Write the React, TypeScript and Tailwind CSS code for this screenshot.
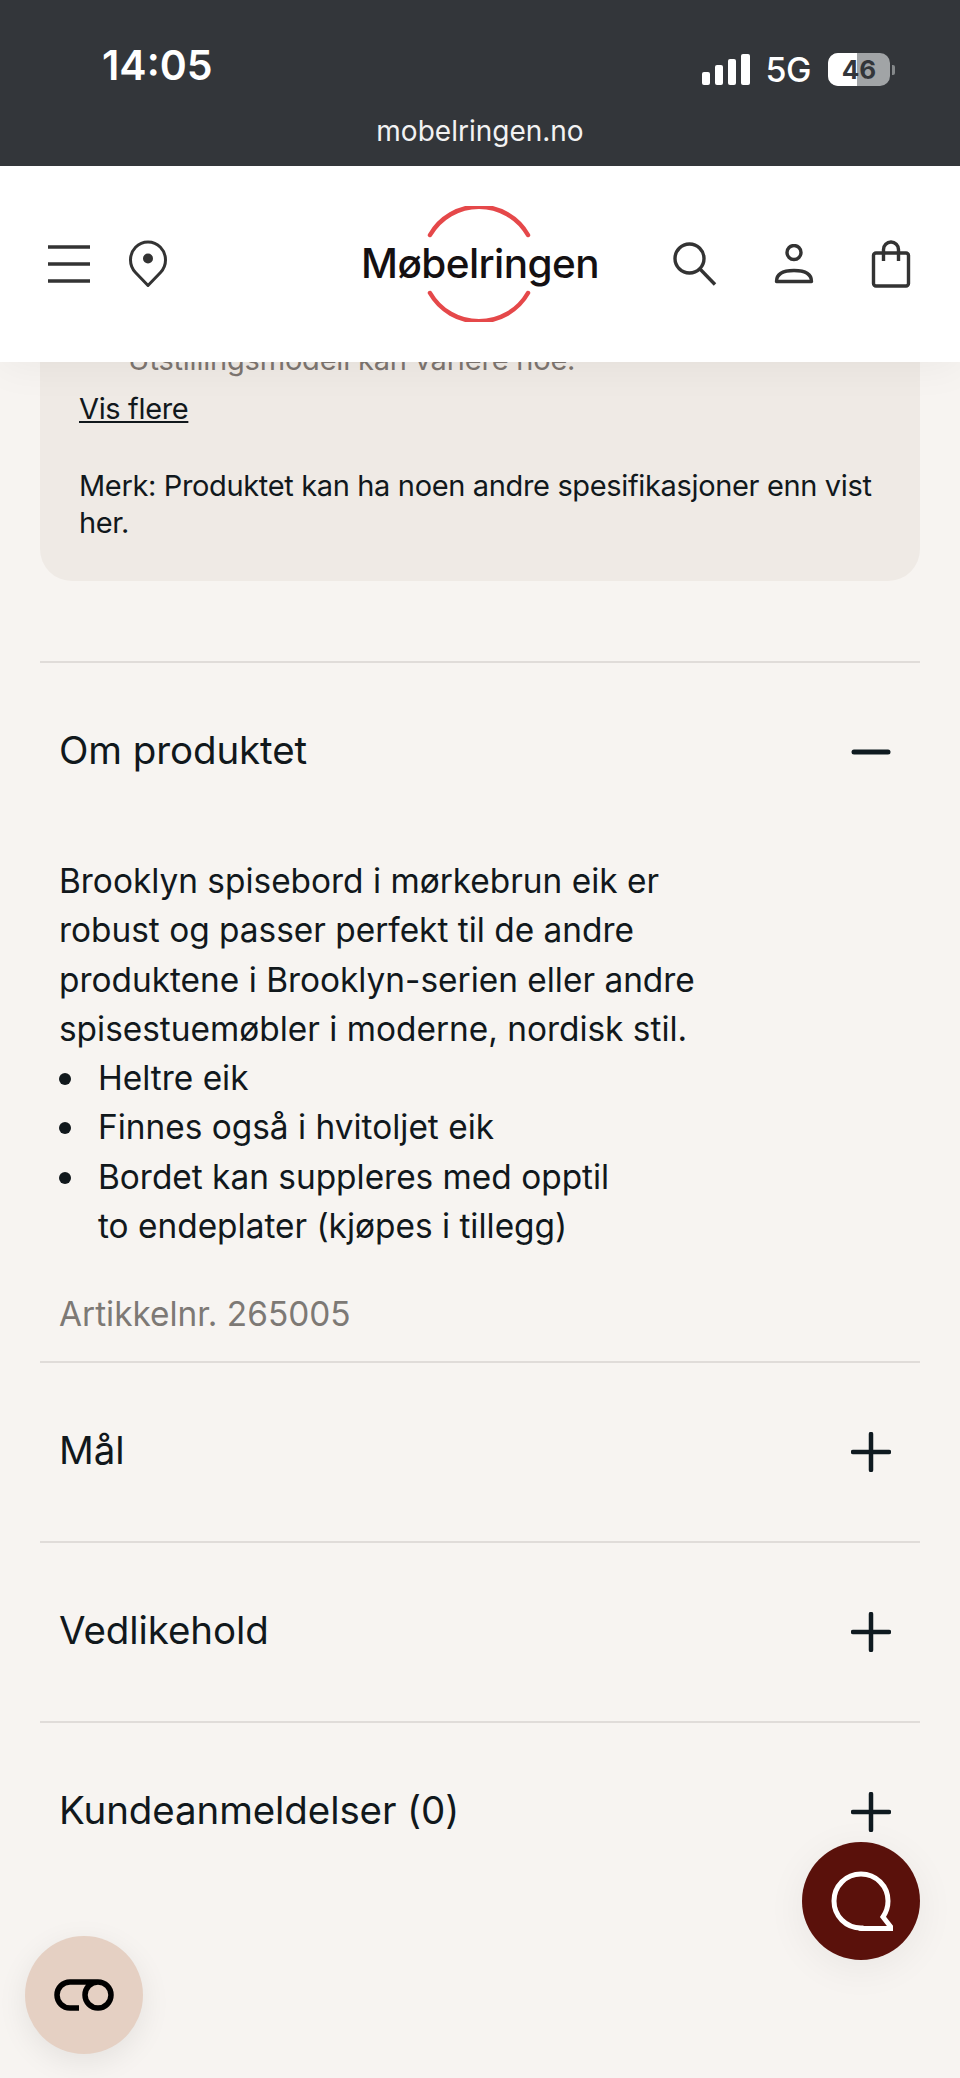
import { ReactNode } from "react";

const font = "font-['Inter','Liberation_Sans',sans-serif]";

function MenuIcon() {
  return (
    <svg width="44" height="40" viewBox="0 0 44 40" fill="none" stroke="#333333" strokeWidth="3.6">
      <path d="M1 3h42M1 20h42M1 37h42" />
    </svg>
  );
}

function PinIcon() {
  return (
    <svg width="38" height="48" viewBox="0 0 38 48" fill="none">
      <path
        d="M19 45.500 6.500 32.500C3.200 29 1.500 25.200 1.500 20 1.500 10 9.200 2 19 2s17.500 8 17.500 18c0 5.200-1.700 9-5 12.500z"
        stroke="#333333"
        strokeWidth="3"
        strokeLinejoin="round"
      />
      <circle cx="19" cy="18.500" r="5" fill="#333333" />
    </svg>
  );
}

function SearchIcon() {
  return (
    <svg width="44" height="44" viewBox="0 0 44 44" fill="none" stroke="#333333" strokeWidth="3.400">
      <circle cx="16.500" cy="16.500" r="14.500" />
      <path d="m27 27 15 15.500" />
    </svg>
  );
}

function UserIcon() {
  return (
    <svg width="40" height="40" viewBox="0 0 40 40" fill="none" stroke="#333333" strokeWidth="3.400">
      <circle cx="20" cy="8.500" r="7" />
      <path d="M2.500 37.500c0-7.500 7-11 17.500-11s17.500 3.500 17.500 11z" strokeLinejoin="round" />
    </svg>
  );
}

function BagIcon() {
  return (
    <svg width="40" height="48" viewBox="0 0 40 48" fill="none" stroke="#333333" strokeWidth="3.400">
      <rect x="2.500" y="13" width="35" height="33" rx="2.500" />
      <path d="M12.500 21V9.500a7.500 7.500 0 0 1 15 0V21" />
    </svg>
  );
}

function PlusIcon() {
  return (
    <svg width="40" height="40" viewBox="0 0 40 40" fill="none" stroke="#0f1a20" strokeWidth="4.500" strokeLinecap="round">
      <path d="M2 20h36M20 2v36" />
    </svg>
  );
}

function MinusIcon() {
  return (
    <svg width="40" height="40" viewBox="0 0 40 40" fill="none" stroke="#0f1a20" strokeWidth="5" strokeLinecap="round">
      <path d="M3 20h34" />
    </svg>
  );
}

function AccordionRow({ title, children }: { title: string; children?: ReactNode }) {
  return (
    <div className="border-t-2 border-[#e0dcd9]">
      <div className="flex h-[178px] items-center justify-between pl-[19px] pr-[29px]">
        <span className="mb-[3px] text-[38.500px] tracking-[-0.1px] text-[#11181c]">{title}</span>
        {children ?? <PlusIcon />}
      </div>
    </div>
  );
}

function Bullet({ children }: { children: ReactNode }) {
  return (
    <li className="flex">
      <span className="mt-[19px] mr-[27px] h-[12px] w-[12px] shrink-0 rounded-full bg-[#11181c]" />
      <span>{children}</span>
    </li>
  );
}

function App() {
  return (
    <div className={`relative h-[2078px] w-[960px] overflow-hidden bg-[#f7f4f1] ${font}`}>
      {/* statusbar */}
      <div className="relative z-20 h-[166px] bg-[#33363a] text-white">
        <div className="flex h-[104px] items-end justify-between pb-[18px] pl-[102px] pr-[65px]">
          <span className="text-[41px] leading-[41px] font-semibold">14:05</span>
          <div className="flex items-center">
            <div className="mr-[16px] flex items-end gap-[5px]">
              <div className="h-[13px] w-[8px] rounded-[2px] bg-white" />
              <div className="h-[20px] w-[8px] rounded-[2px] bg-white" />
              <div className="h-[26px] w-[8px] rounded-[2px] bg-white" />
              <div className="h-[31px] w-[9px] rounded-[2px] bg-white" />
            </div>
            <span className="mr-[17px] text-[34px] leading-[32px] font-medium tracking-[-0.5px]">5G</span>
            <div className="flex items-center gap-[2px]">
              <div className="relative flex h-[33px] w-[62px] items-center justify-center overflow-hidden rounded-[10px] bg-[#a1a4a6]">
                <div className="absolute inset-y-0 left-0 w-[29px] bg-white" />
                <span className="relative text-[26px] leading-none font-bold text-[#33363a]">46</span>
              </div>
              <div className="h-[10px] w-[3px] rounded-r-[2px] bg-[#85888a]" />
            </div>
          </div>
        </div>
        <div className="mt-[10px] text-center text-[28px] leading-[34px] text-[#f2f2f2]">mobelringen.no</div>
      </div>

      {/* header */}
      <header className="relative z-10 flex h-[196px] items-center justify-between bg-white pl-[47px] pr-[49px] shadow-[0_4px_40px_rgba(0,0,0,0.05)]">
        <div className="flex items-center gap-[38px]">
          <MenuIcon />
          <PinIcon />
        </div>
        <div className="absolute left-[361px] top-[40px] flex h-[116px] w-[238px] items-center justify-center">
          <svg className="absolute -left-[5px] top-0" width="236" height="116" viewBox="0 0 236 116" fill="none" stroke="#e5484a" strokeWidth="4.500" strokeLinecap="round">
            <path d="M74 29a56.500 56.500 0 0 1 98 0M74 87a56.500 56.500 0 0 0 98 0" />
          </svg>
          <span className="relative text-[40.500px] leading-none font-medium tracking-[-0.6px] whitespace-nowrap text-[#141012]">Møbelringen</span>
        </div>
        <div className="flex items-center gap-[57px]">
          <SearchIcon />
          <UserIcon />
          <BagIcon />
        </div>
      </header>

      {/* content */}
      <main className="-mt-[18px] px-[40px]">
        <div className="rounded-b-[32px] bg-[#efeae5] pr-[40px] pb-[40px] pl-[39px] text-[29px] leading-[37px] tracking-[-0.35px]">
          <p className="h-[37px] pl-[49px] leading-[31px] tracking-[-0.2px] text-[#7d7570]">Utstillingsmodell kan variere noe.</p>
          <a className="mt-[9px] block text-[#11181c] underline">Vis flere</a>
          <p className="mt-[40px] text-[#11181c]">
            Merk: Produktet kan ha noen andre spesifikasjoner enn vist her.
          </p>
        </div>

        <div className="mt-[80px]">
          <AccordionRow title="Om produktet">
            <MinusIcon />
          </AccordionRow>
          <div className="pt-[16px] pl-[19px] text-[33.400px] leading-[49.300px] text-[#11181c]">
            <p>
              Brooklyn spisebord i mørkebrun eik er
              <br />
              robust og passer perfekt til de andre
              <br />
              produktene i Brooklyn-serien eller andre
              <br />
              spisestuemøbler i moderne, nordisk stil.
            </p>
            <ul>
              <Bullet>Heltre eik</Bullet>
              <Bullet>Finnes også i hvitoljet eik</Bullet>
              <Bullet>
                Bordet kan suppleres med opptil
                <br />
                to endeplater (kjøpes i tillegg)
              </Bullet>
            </ul>
            <p className="mt-[39px] h-[71px] text-[#7d7975]">Artikkelnr. 265005</p>
          </div>
          <AccordionRow title="Mål" />
          <AccordionRow title="Vedlikehold" />
          <AccordionRow title="Kundeanmeldelser (0)" />
        </div>
      </main>

      {/* flytende knapper */}
      <button className="absolute left-[25px] top-[1936px] flex h-[118px] w-[118px] items-center justify-center rounded-full bg-[#e5d0c3] shadow-[0_8px_30px_rgba(0,0,0,0.08)]">
        <svg width="62" height="32" viewBox="0 0 62 32" fill="none" stroke="#000000" strokeWidth="5.500">
          <path d="M26 29H17a13 13 0 0 1 0-26h28a13 13 0 0 1 0 26 13 13 0 0 1 0-26" />
        </svg>
      </button>
      <button className="absolute left-[802px] top-[1842px] flex h-[118px] w-[118px] items-center justify-center rounded-full bg-[#5a110b] shadow-[0_8px_40px_rgba(0,0,0,0.06)]">
        <svg width="64" height="64" viewBox="0 0 64 64" fill="none" stroke="#ffffff" strokeWidth="5">
          <path d="M32 59C17 59 5 47 5 32S17 5 32 5s27 12 27 27c0 6-2 11.500-5 16l9 11.500H32z" strokeLinejoin="miter" />
        </svg>
      </button>
    </div>
  );
}

export default App;
